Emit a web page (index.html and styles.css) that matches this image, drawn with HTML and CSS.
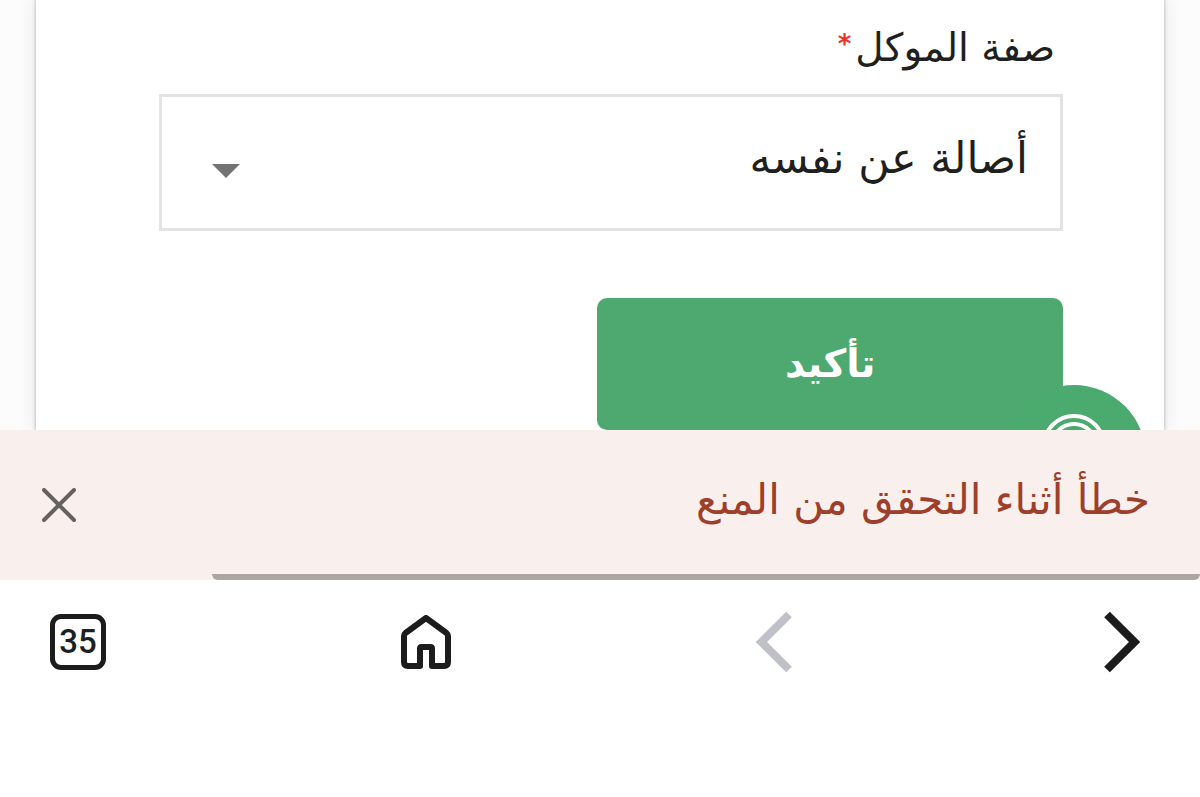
FILE: index.html
```html
<!DOCTYPE html>
<html lang="ar" dir="rtl">
<head>
<meta charset="utf-8">
<meta name="viewport" content="width=device-width, initial-scale=1">
<title>صفة الموكل</title>
<link rel="stylesheet" href="styles.css">
</head>
<body>
<main class="page">
  <form class="card">
    <label class="label" for="capacity">صفة الموكل<span class="required">*</span></label>
    <div class="field">
      <select class="select" id="capacity">
        <option>أصالة عن نفسه</option>
      </select>
      <svg class="caret" viewBox="0 0 28 14" aria-hidden="true"><path d="M0 0H28L14 14Z"/></svg>
    </div>
    <button class="confirm" type="button">تأكيد</button>
  </form>
  <button class="assist" type="button" aria-label="المساعدة">
    <svg class="assist-icon" viewBox="0 0 64 64" aria-hidden="true"><circle cx="32" cy="32" r="30"/><circle cx="32" cy="32" r="22"/></svg>
  </button>
</main>
<div class="toast" role="alert">
  <p class="message">خطأ أثناء التحقق من المنع</p>
  <button class="close" type="button" aria-label="إغلاق">
    <svg class="close-icon" viewBox="0 0 34 34" aria-hidden="true"><path d="M2 2L32 32M32 2L2 32"/></svg>
  </button>
  <div class="progress"></div>
</div>
<nav class="toolbar" dir="ltr">
  <button class="tool tabs" type="button">35</button>
  <button class="tool" type="button" aria-label="الرئيسية">
    <svg class="home-icon" viewBox="0 0 50 54" aria-hidden="true"><path d="M25 3L45.500 18Q47 19.200 47 21V47Q47 51 43 51H31V33.500Q31 32 29.500 32H20.500Q19 32 19 33.500V51H7Q3 51 3 47V21Q3 19.200 4.500 18Z"/></svg>
  </button>
  <button class="tool" type="button" aria-label="رجوع" disabled>
    <svg class="arrow-icon muted" viewBox="0 0 36 62" aria-hidden="true"><path d="M33 3.500L5.500 31L33 58.500"/></svg>
  </button>
  <button class="tool" type="button" aria-label="تقدم">
    <svg class="arrow-icon" viewBox="0 0 36 62" aria-hidden="true"><path d="M3 3.500L30.500 31L3 58.500"/></svg>
  </button>
</nav>
</body>
</html>
```
FILE: styles.css
```css
* {
  box-sizing: border-box;
}

body {
  margin: 0;
  min-height: 100vh;
  display: flex;
  flex-direction: column;
  background: #fff;
  color: #1e1f20;
  font-family: "DejaVu Sans", sans-serif;
}

button {
  padding: 0;
  border: 0;
  background: none;
  color: inherit;
  font: inherit;
  cursor: pointer;
}

svg {
  display: block;
  fill: none;
}

.page {
  position: relative;
  overflow: hidden;
  padding: 0 36px;
  background: #fcfcfd;
}

.card {
  display: flex;
  flex-direction: column;
  align-items: flex-start;
  padding: 24px 101px 0 123px;
  background: #fff;
  box-shadow: 0 0 3px 1px #c4c4c6, 0 0 20px #e8e8ea;
}

.label {
  display: flex;
  gap: 4px;
  padding: 0 8px;
  margin-bottom: 22px;
  font-size: 39px;
  line-height: 48px;
}

.required {
  color: #e8352b;
  font-size: 26px;
  font-weight: 700;
  line-height: 40px;
}

.field {
  position: relative;
  width: 100%;
  margin-bottom: 67px;
}

.select {
  display: block;
  width: 100%;
  padding: 32px 32px 40px;
  border: 3px solid #e3e3e3;
  border-radius: 0;
  background: #fff;
  color: inherit;
  appearance: none;
  font-family: inherit;
  font-size: 43px;
  line-height: 59px;
}

.caret {
  position: absolute;
  left: 53px;
  top: 70px;
  width: 28px;
  fill: #737373;
  pointer-events: none;
}

.confirm {
  width: 51.5%;
  padding: 36px;
  border-radius: 10px;
  background: #4da970;
  color: #fff;
  font-size: 39px;
  font-weight: 700;
  line-height: 60px;
}

.assist {
  position: absolute;
  right: 54px;
  bottom: -99px;
  width: 144px;
  height: 144px;
  border-radius: 50%;
  background: #4baa6d;
}

.assist-icon {
  width: 64px;
  margin: -22px auto 0;
  stroke: #fff;
  stroke-width: 4;
}

.toast {
  position: relative;
  display: flex;
  align-items: center;
  justify-content: space-between;
  padding: 40px 50px 50px 42px;
  background: #f9f0ee;
}

.message {
  margin: 0;
  color: #9e3f2b;
  font-size: 42px;
  line-height: 60px;
}

.close-icon {
  width: 34px;
  margin-top: 10px;
  stroke: #666161;
  stroke-width: 4;
  stroke-linecap: round;
}

.progress {
  position: absolute;
  right: 0;
  bottom: 0;
  width: 82.3%;
  height: 6px;
  border-radius: 0 0 6px 6px;
  background: #aca6a3;
}

.toolbar {
  display: flex;
  align-items: center;
  justify-content: space-between;
  padding: 31px 50px 0;
}

.tool {
  display: grid;
  place-items: center;
  width: 56px;
}

.tabs {
  height: 56px;
  border: 5px solid #1c1c1c;
  border-radius: 11px;
  font-family: Roboto, sans-serif;
  font-size: 33px;
  font-weight: 500;
  line-height: 46px;
}

.home-icon {
  width: 50px;
  stroke: #1c1c1c;
  stroke-width: 6;
  stroke-linejoin: round;
}

.arrow-icon {
  width: 36px;
  stroke: #1c1c1c;
  stroke-width: 8;
}

.muted {
  stroke: #bfc0c8;
}
```
